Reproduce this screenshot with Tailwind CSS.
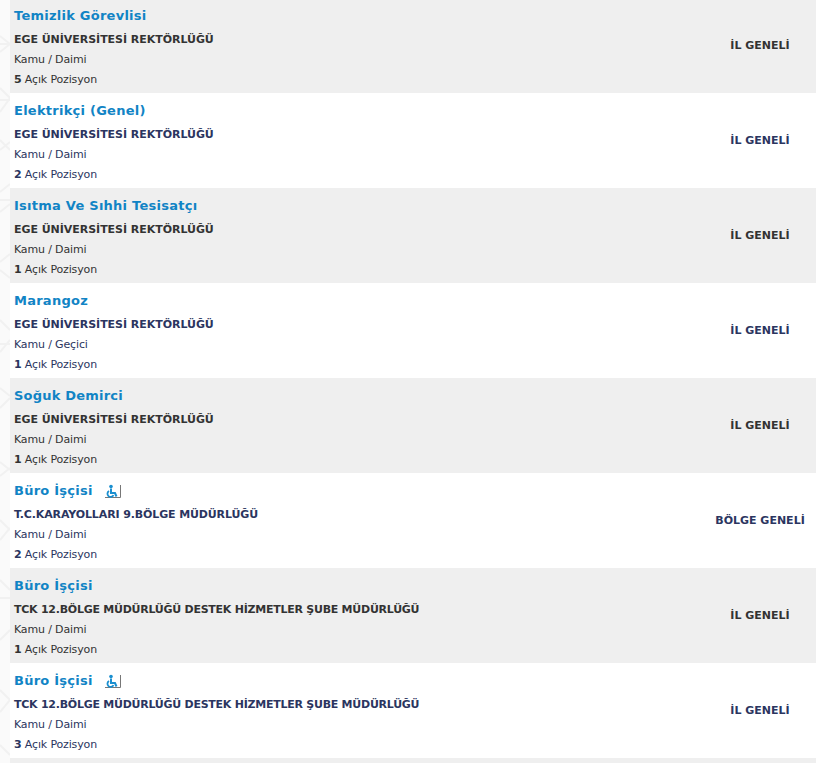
<!DOCTYPE html>
<html><head><meta charset="utf-8"><script src="https://cdn.jsdelivr.net/npm/@tailwindcss/browser@4"></script></head>
<body class="relative bg-[#fafafa] font-['DejaVu_Sans',sans-serif] overflow-hidden h-[763px]">
<svg class="absolute left-0 top-0" width="10" height="763" viewBox="0 0 10 763" fill="none" stroke="#f1f1f1" stroke-width="2"><path d="M0 36L10 44M0 52L10 44M0 44H10M0 88L10 98M0 112L10 98M0 100H10M0 150L10 142M0 140L10 150M0 192L10 184M0 200H10M0 212L10 204M0 262L10 254M0 270L10 278M0 320L10 330M0 344H10M0 352L10 340M0 388L10 396M0 408L10 398M0 462L10 470M0 476L10 468M0 520L10 530M0 540L10 528M0 580L10 590M0 598H10M0 640L10 630M0 690L10 700M0 712L10 700M0 745L10 755"/></svg>
<div class="relative pl-[10px] mt-[-2px]">
<div class="h-[95px] bg-[#efefef] flex items-stretch pl-1 text-[#333]"><div class="flex-1 pt-[8px]"><div class="h-[20px] leading-[20px] text-[13px] font-bold tracking-[0.25px] text-[#1184c5]">Temizlik Görevlisi</div><div class="mt-[4px] h-[20px] leading-[20px] text-[11px] font-bold tracking-[-0.04px]">EGE ÜNİVERSİTESİ REKTÖRLÜĞÜ</div><div class="h-[20px] leading-[20px] text-[11px] tracking-[-0.15px]">Kamu / Daimi</div><div class="h-[20px] leading-[20px] text-[11px] tracking-[-0.15px]"><b>5</b> Açık Pozisyon</div></div><div class="w-[112px] flex items-center justify-center pt-px text-[11px] font-bold">İL GENELİ</div></div>
<div class="h-[95px] bg-white flex items-stretch pl-1 text-[#2b3560]"><div class="flex-1 pt-[8px]"><div class="h-[20px] leading-[20px] text-[13px] font-bold tracking-[0.25px] text-[#1184c5]">Elektrikçi (Genel)</div><div class="mt-[4px] h-[20px] leading-[20px] text-[11px] font-bold tracking-[-0.04px]">EGE ÜNİVERSİTESİ REKTÖRLÜĞÜ</div><div class="h-[20px] leading-[20px] text-[11px] tracking-[-0.15px]">Kamu / Daimi</div><div class="h-[20px] leading-[20px] text-[11px] tracking-[-0.15px]"><b>2</b> Açık Pozisyon</div></div><div class="w-[112px] flex items-center justify-center pt-px text-[11px] font-bold">İL GENELİ</div></div>
<div class="h-[95px] bg-[#efefef] flex items-stretch pl-1 text-[#333]"><div class="flex-1 pt-[8px]"><div class="h-[20px] leading-[20px] text-[13px] font-bold tracking-[0.25px] text-[#1184c5]">Isıtma Ve Sıhhi Tesisatçı</div><div class="mt-[4px] h-[20px] leading-[20px] text-[11px] font-bold tracking-[-0.04px]">EGE ÜNİVERSİTESİ REKTÖRLÜĞÜ</div><div class="h-[20px] leading-[20px] text-[11px] tracking-[-0.15px]">Kamu / Daimi</div><div class="h-[20px] leading-[20px] text-[11px] tracking-[-0.15px]"><b>1</b> Açık Pozisyon</div></div><div class="w-[112px] flex items-center justify-center pt-px text-[11px] font-bold">İL GENELİ</div></div>
<div class="h-[95px] bg-white flex items-stretch pl-1 text-[#2b3560]"><div class="flex-1 pt-[8px]"><div class="h-[20px] leading-[20px] text-[13px] font-bold tracking-[0.25px] text-[#1184c5]">Marangoz</div><div class="mt-[4px] h-[20px] leading-[20px] text-[11px] font-bold tracking-[-0.04px]">EGE ÜNİVERSİTESİ REKTÖRLÜĞÜ</div><div class="h-[20px] leading-[20px] text-[11px] tracking-[-0.15px]">Kamu / Geçici</div><div class="h-[20px] leading-[20px] text-[11px] tracking-[-0.15px]"><b>1</b> Açık Pozisyon</div></div><div class="w-[112px] flex items-center justify-center pt-px text-[11px] font-bold">İL GENELİ</div></div>
<div class="h-[95px] bg-[#efefef] flex items-stretch pl-1 text-[#333]"><div class="flex-1 pt-[8px]"><div class="h-[20px] leading-[20px] text-[13px] font-bold tracking-[0.2px] text-[#1184c5]">Soğuk Demirci</div><div class="mt-[4px] h-[20px] leading-[20px] text-[11px] font-bold tracking-[-0.04px]">EGE ÜNİVERSİTESİ REKTÖRLÜĞÜ</div><div class="h-[20px] leading-[20px] text-[11px] tracking-[-0.15px]">Kamu / Daimi</div><div class="h-[20px] leading-[20px] text-[11px] tracking-[-0.15px]"><b>1</b> Açık Pozisyon</div></div><div class="w-[112px] flex items-center justify-center pt-px text-[11px] font-bold">İL GENELİ</div></div>
<div class="h-[95px] bg-white flex items-stretch pl-1 text-[#2b3560]"><div class="flex-1 pt-[8px]"><div class="h-[20px] leading-[20px] text-[13px] font-bold tracking-[0.25px] text-[#1184c5] flex items-center">Büro İşçisi<svg class="ml-[11px]" width="17" height="15" viewBox="0 0 17 15" fill="none"><path d="M16.5 1v12.5H1" stroke="#777"/><circle cx="7" cy="2.5" r="1.8" fill="#1a8fd0"/><path d="M7 4.5v4.5h4l1.5 3.5" stroke="#1a8fd0" stroke-width="2"/><path d="M5 7a3.2 3.2 0 1 0 4.5 4.2" stroke="#1a8fd0" stroke-width="1.8"/></svg></div><div class="mt-[4px] h-[20px] leading-[20px] text-[11px] font-bold tracking-[-0.12px]">T.C.KARAYOLLARI 9.BÖLGE MÜDÜRLÜĞÜ</div><div class="h-[20px] leading-[20px] text-[11px] tracking-[-0.15px]">Kamu / Daimi</div><div class="h-[20px] leading-[20px] text-[11px] tracking-[-0.15px]"><b>2</b> Açık Pozisyon</div></div><div class="w-[112px] flex items-center justify-center pt-px text-[11px] font-bold">BÖLGE GENELİ</div></div>
<div class="h-[95px] bg-[#efefef] flex items-stretch pl-1 text-[#333]"><div class="flex-1 pt-[8px]"><div class="h-[20px] leading-[20px] text-[13px] font-bold tracking-[0.25px] text-[#1184c5]">Büro İşçisi</div><div class="mt-[4px] h-[20px] leading-[20px] text-[11px] font-bold tracking-[-0.25px]">TCK 12.BÖLGE MÜDÜRLÜĞÜ DESTEK HİZMETLER ŞUBE MÜDÜRLÜĞÜ</div><div class="h-[20px] leading-[20px] text-[11px] tracking-[-0.15px]">Kamu / Daimi</div><div class="h-[20px] leading-[20px] text-[11px] tracking-[-0.15px]"><b>1</b> Açık Pozisyon</div></div><div class="w-[112px] flex items-center justify-center pt-px text-[11px] font-bold">İL GENELİ</div></div>
<div class="h-[95px] bg-white flex items-stretch pl-1 text-[#2b3560]"><div class="flex-1 pt-[8px]"><div class="h-[20px] leading-[20px] text-[13px] font-bold tracking-[0.25px] text-[#1184c5] flex items-center">Büro İşçisi<svg class="ml-[11px]" width="17" height="15" viewBox="0 0 17 15" fill="none"><path d="M16.5 1v12.5H1" stroke="#777"/><circle cx="7" cy="2.5" r="1.8" fill="#1a8fd0"/><path d="M7 4.5v4.5h4l1.5 3.5" stroke="#1a8fd0" stroke-width="2"/><path d="M5 7a3.2 3.2 0 1 0 4.5 4.2" stroke="#1a8fd0" stroke-width="1.8"/></svg></div><div class="mt-[4px] h-[20px] leading-[20px] text-[11px] font-bold tracking-[-0.25px]">TCK 12.BÖLGE MÜDÜRLÜĞÜ DESTEK HİZMETLER ŞUBE MÜDÜRLÜĞÜ</div><div class="h-[20px] leading-[20px] text-[11px] tracking-[-0.15px]">Kamu / Daimi</div><div class="h-[20px] leading-[20px] text-[11px] tracking-[-0.15px]"><b>3</b> Açık Pozisyon</div></div><div class="w-[112px] flex items-center justify-center pt-px text-[11px] font-bold">İL GENELİ</div></div>
<div class="h-[10px] bg-[#efefef]"></div>
</div>
</body></html>
